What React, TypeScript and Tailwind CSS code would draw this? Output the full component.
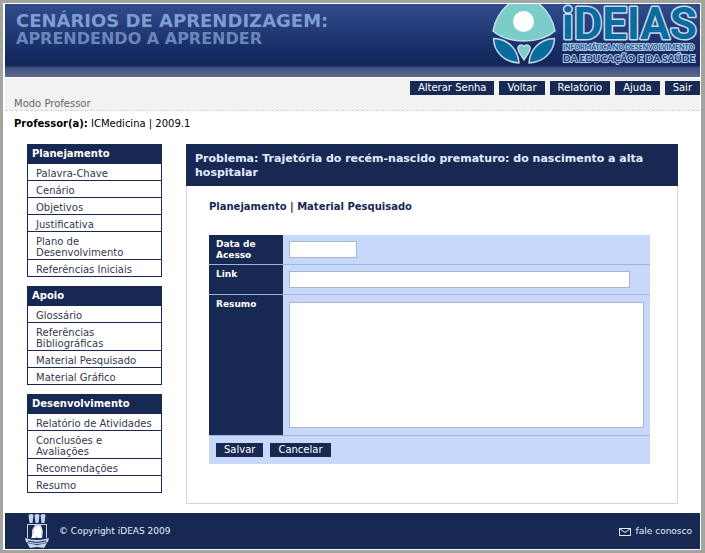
const menus = [
  {
    title: "Planejamento",
    items: ["Palavra-Chave", "Cenário", "Objetivos", "Justificativa", "Plano de Desenvolvimento", "Referências Iniciais"],
  },
  { title: "Apoio", items: ["Glossário", "Referências Bibliográficas", "Material Pesquisado", "Material Gráfico"] },
  {
    title: "Desenvolvimento",
    items: ["Relatório de Atividades", "Conclusões e Avaliações", "Recomendações", "Resumo"],
  },
];

const actions = ["Alterar Senha", "Voltar", "Relatório", "Ajuda", "Sair"];

function Logo() {
  return (
    <svg className="h-[73px] w-[210px] shrink-0" viewBox="490 4 210 73" role="img" aria-label="iDEIAS">
      <g stroke="#c9dcec" strokeWidth="1.5" strokeLinejoin="round">
        <path
          d="M493 31C495 19 501 10 511 2H537C547 10 553 19 555 31C547 38 536 41 524 41S501 38 493 31Z"
          fill="#7acdc8"
        />
        <path d="M493.500 38.500C508 39 518 49 519 63C504 62 494 52 493.500 38.500Z" fill="#0a6ba0" />
        <path d="M554.500 38.500C540 39 530 49 529 63C544 62 554 52 554.500 38.500Z" fill="#0a6ba0" />
        <path d="M524 46.500C526 44 530.500 45 530 49C529.500 53 526 56 524 60C522 56 518.500 53 518 49C517.500 45 522 44 524 46.500Z" fill="#7acdc8" />
      </g>
      <circle cx="523.500" cy="21.500" r="10.500" fill="#ffffff" />
      <g strokeLinejoin="round" paintOrder="stroke">
        <text
          className="font-['Roboto',sans-serif] text-[44px] font-bold"
          x="562"
          y="39"
          fill="#0a6ba0"
          stroke="#c9dcec"
          strokeWidth="3"
        >
          iDEIAS
        </text>
        <text
          className="font-['Lato',sans-serif] text-[7px] font-bold"
          x="563"
          y="50"
          fill="#16599a"
          stroke="#b5cbe2"
          strokeWidth="2"
        >
          INFORMÁTICA NO DESENVOLVIMENTO
        </text>
        <text
          className="font-['Lato',sans-serif] text-[10px] font-black"
          x="563"
          y="62"
          fill="#1a3c7c"
          stroke="#b5cbe2"
          strokeWidth="2"
        >
          DA EDUCAÇÃO E DA SAÚDE
        </text>
      </g>
    </svg>
  );
}

function Crest() {
  return (
    <svg className="h-9 w-7" viewBox="23 513 28 36" aria-hidden="true">
      <g fill="#c3d3ec">
        <path d="M28.500 515q3-2 5 0l-1 8h-3zM34.500 515q3-2 5 0l-1 8h-3zM40.500 515q3-2 5 0l-1 8h-3z" />
        <path d="M27 524h20v14H27z" />
        <path d="M25 538q12 4 24 0l-1 4q-11 4-22 0z" />
        <path d="M27 543l10 2 10-2-3 5-7-1-7 1z" />
      </g>
      <path d="M28 525h7l-3 5v8h-4zM41 525h5v13h-4l1-6z" fill="#172952" />
      <path d="M34 529l2-2 4-1 2 4-1 3 1 5h-4l-1-3-2 3h-4l3-5z" fill="#ffffff" />
      <path d="M28 541q9 3 18 0" stroke="#172952" fill="none" />
    </svg>
  );
}

const labelClass = "w-[74px] shrink-0 bg-[#172952] pt-1 pr-2 pl-[7px] text-[9px] leading-[11px] font-bold text-white";
const rowClass = "flex border-b border-[#a0b3dc]";
const fieldClass = "block border border-[#a9b5cb] bg-white px-1 text-[10px] text-black outline-none";
const buttonClass = "h-[14px] bg-[#172952] px-2 text-[10px] leading-[14px] text-white";

export default function App() {
  return (
    <div className="border-[3px] border-r-4 border-b-4 border-[#a3a3a0] bg-white font-['DejaVu_Sans',Verdana,sans-serif] text-[10px]">
      <div className="border border-l-2 border-white">
        <header className="flex h-[73px] justify-between overflow-hidden bg-[linear-gradient(180deg,#2f4c8a_0px,#263f7c_20px,#142a60_50px,#13265a_62px,#3c4d7d_63px,#5a6890_72px)]">
          <h1 className="pt-[7px] pl-[11px] font-bold whitespace-nowrap text-[#7d9dd3]">
            <span className="block text-lg leading-5">CENÁRIOS DE APRENDIZAGEM:</span>
            <span className="block text-base leading-4 text-[#6a86bd]">APRENDENDO A APRENDER</span>
          </h1>
          <Logo />
        </header>

        <div className="mt-px flex h-[33px] justify-between border-b border-dashed border-[#d4d4d4] bg-[#f2f2f2]">
          <p className="self-end pl-[9px] leading-3 text-[#666666]">Modo Professor</p>
          <nav className="flex gap-[5px] pt-[3px]">
            {actions.map((a) => (
              <button key={a} type="button" className={buttonClass}>
                {a}
              </button>
            ))}
          </nav>
        </div>

        <p className="pt-[7px] pl-[9px] leading-3 text-black">
          <b>Professor(a):</b> ICMedicina | 2009.1
        </p>

        <div className="mt-[14px] flex items-start gap-6 px-[22px]">
          <aside className="flex w-[135px] shrink-0 flex-col gap-[9px]">
            {menus.map((m) => (
              <nav key={m.title} aria-label={m.title} className="border-x border-[#172952]">
                <h2 className="h-5 bg-[#172952] pl-1 text-[10px] leading-5 font-bold text-white">{m.title}</h2>
                <ul>
                  {m.items.map((i) => (
                    <li key={i} className="border-b border-[#172952] pt-1 pr-1 pb-px pl-2 leading-[11px] text-[#33394d]">
                      <a href="#">{i}</a>
                    </li>
                  ))}
                </ul>
              </nav>
            ))}
          </aside>

          <main className="min-w-0 flex-1 border border-[#d3d6dc] pb-[39px]">
            <h2 className="-mx-px -mt-px bg-[#172952] px-[9px] pt-2 pb-[6px] text-[11px] leading-[14px] font-bold text-[#e3edff]">
              Problema: Trajetória do recém-nascido prematuro: do nascimento a alta hospitalar
            </h2>
            <h3 className="mt-[14px] pl-[22px] text-[10px] leading-[14px] font-bold text-[#172952]">
              Planejamento | Material Pesquisado
            </h3>
            <form className="mt-[21px] mr-[27px] ml-[22px] bg-[#c8d8fb]" onSubmit={(e) => e.preventDefault()}>
              <div className={rowClass}>
                <label htmlFor="data" className={labelClass}>
                  Data de Acesso
                </label>
                <div className="flex-1 px-[6px] py-[6px]">
                  <input id="data" className={fieldClass + " h-[17px] w-[68px]"} />
                </div>
              </div>
              <div className={rowClass}>
                <label htmlFor="link" className={labelClass}>
                  Link
                </label>
                <div className="flex-1 px-[6px] py-[6px]">
                  <input id="link" className={fieldClass + " h-[17px] w-[96%]"} />
                </div>
              </div>
              <div className={rowClass}>
                <label htmlFor="resumo" className={labelClass}>
                  Resumo
                </label>
                <div className="flex-1 px-[6px] py-[7px]">
                  <textarea id="resumo" className={fieldClass + " h-[126px] w-full resize-none"} />
                </div>
              </div>
              <div className="flex gap-[7px] px-[7px] py-[7px]">
                <button type="submit" className={buttonClass}>
                  Salvar
                </button>
                <button type="button" className={buttonClass}>
                  Cancelar
                </button>
              </div>
            </form>
          </main>
        </div>

        <footer className="mt-[9px] flex h-9 items-center justify-between bg-[#172952] pr-2 pl-[18px] text-[9px] text-[#e3edff]">
          <div className="flex items-center gap-2">
            <Crest />
            <p className="pt-0.5">© Copyright iDEAS 2009</p>
          </div>
          <a href="#" className="flex items-center gap-[5px] pt-0.5">
            <svg className="h-2 w-3" viewBox="0 0 12 8" fill="none" stroke="currentColor" aria-hidden="true">
              <path d="M.5.5h11v7H.5zM.5.5l5.500 4 5.500-4" />
            </svg>
            fale conosco
          </a>
        </footer>
      </div>
    </div>
  );
}
